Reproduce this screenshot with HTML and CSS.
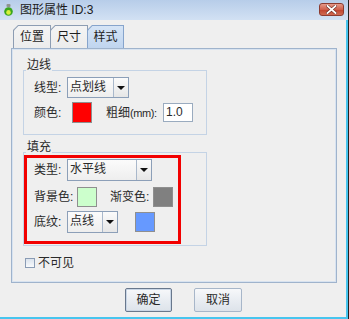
FILE: index.html
```html
<!DOCTYPE html>
<html>
<head>
<meta charset="utf-8">
<link rel="stylesheet" href="styles.css">
</head>
<body>
<div class="window">
  <div class="titlebar">
    <svg class="app-icon" width="9" height="12" viewBox="0 0 9 12">
      <rect x="2.5" y="0" width="4" height="3" rx="1" fill="#8f9490"/>
      <circle cx="4.5" cy="7.5" r="4.3" fill="#3aa61c"/>
      <circle cx="4.5" cy="8.4" r="2.3" fill="#d9f03c"/>
    </svg>
    <span class="title">图形属性 ID:3</span>
    <div class="close">
      <svg width="11" height="9" viewBox="0 0 11 9">
        <path d="M1.5 1 L9.5 8 M9.5 1 L1.5 8" stroke="#6b2a22" stroke-width="3" stroke-linecap="square"/>
        <path d="M1.5 1 L9.5 8 M9.5 1 L1.5 8" stroke="#ffffff" stroke-width="1.8" stroke-linecap="square"/>
      </svg>
    </div>
  </div>
  <div class="client">
    <div class="tabs">
      <div class="tab"><span>位置</span></div>
      <div class="tab"><span>尺寸</span></div>
      <div class="tab active"><span>样式</span></div>
    </div>
    <div class="panel">
      <div class="group g1">
        <span class="group-title">边线</span>
        <div class="row row-combo-a">
          <span class="label w33">线型:</span>
          <div class="combo combo-line"><span class="combo-text">点划线</span><span class="combo-btn"><i class="tri"></i></span></div>
        </div>
        <div class="row row-sw-a">
          <span class="label w38">颜色:</span>
          <div class="sw sw-red"></div>
          <span class="label w57 gap14">粗细<span class="latin">(mm):</span></span>
          <div class="input">1.0</div>
        </div>
      </div>
      <div class="group g2">
        <span class="group-title">填充</span>
        <div class="hl">
          <div class="row row-combo">
            <span class="label w33">类型:</span>
            <div class="combo combo-type"><span class="combo-text">水平线</span><span class="combo-btn"><i class="tri"></i></span></div>
          </div>
          <div class="row row-sw">
            <span class="label w43">背景色:</span>
            <div class="sw sw-green"></div>
            <span class="label w43 gap13">渐变色:</span>
            <div class="sw sw-grey"></div>
          </div>
          <div class="row row-combo-b">
            <span class="label w33">底纹:</span>
            <div class="combo combo-pattern"><span class="combo-text">点线</span><span class="combo-btn"><i class="tri"></i></span></div>
            <div class="sw sw-blue"></div>
          </div>
        </div>
      </div>
      <div class="check-row">
        <span class="box"></span>
        <span class="check-text">不可见</span>
      </div>
    </div>
    <div class="buttons">
      <div class="btn btn-default">确定</div>
      <div class="btn">取消</div>
    </div>
  </div>
</div>
</body>
</html>
```

FILE: styles.css
```css
html, body {
  margin: 0;
  padding: 0;
}
body {
  width: 349px;
  height: 319px;
  overflow: hidden;
  background: #efefef;
  font-family: "Liberation Sans", "Noto Sans CJK SC", sans-serif;
  font-size: 12px;
  color: #2a2a2a;
}
.window {
  width: 349px;
  height: 319px;
  box-sizing: border-box;
  border-right: 1px solid #222222;
  display: flex;
  flex-direction: column;
}
.titlebar {
  height: 20px;
  flex: none;
  display: flex;
  align-items: center;
  padding-left: 4px;
  background: linear-gradient(#b7cde9, #d2e1f3);
}
.app-icon {
  flex: none;
}
.title {
  margin-left: 7px;
  line-height: 14px;
  color: #1a1a1a;
}
.close {
  margin-left: auto;
  margin-right: 4px;
  align-self: flex-start;
  margin-top: 3px;
  width: 25px;
  height: 13px;
  box-sizing: border-box;
  border: 1px solid #8c3b30;
  border-radius: 3px;
  background: linear-gradient(#e59a8a, #d0604c 50%, #c0412c 51%, #cf6a52);
  display: flex;
  align-items: center;
  justify-content: center;
}
.client {
  flex: 1;
  box-sizing: border-box;
  border-right: 2px solid #47c5ee;
  border-bottom: 2px solid #47c5ee;
  padding: 5px 0 0 11px;
  display: flex;
  flex-direction: column;
}
.tabs {
  display: flex;
  margin-left: 2px;
  height: 23px;
}
.tab {
  width: 38px;
  height: 23px;
  margin-right: -1px;
  box-sizing: border-box;
  padding: 1px 1px 0 1px;
  background: #8d9db3;
  clip-path: polygon(5px 0, 100% 0, 100% 100%, 0 100%, 0 5px);
}
.tab span {
  display: block;
  height: 100%;
  background: linear-gradient(#f4f4f4, #ececec);
  clip-path: polygon(4.4px 0, 100% 0, 100% 100%, 0 100%, 0 4.4px);
  text-align: center;
  line-height: 22px;
  color: #1e1e1e;
}
.tab.active {
  width: 37px;
  background: #86a4cc;
}
.tab.active span {
  background: linear-gradient(#d5e4f6, #c0d5ef);
}
.panel {
  width: 326px;
  height: 235px;
  box-sizing: border-box;
  border: 1px solid #9fb3cc;
  box-shadow: inset 0 0 0 1px #d8e3f0;
  padding-left: 11px;
  display: flex;
  flex-direction: column;
  align-items: flex-start;
}
.group {
  position: relative;
  width: 184px;
  box-sizing: border-box;
  border: 1px solid #c4d3e5;
}
.group-title {
  position: absolute;
  top: -13px;
  left: 2px;
  padding: 0 1px;
  line-height: 14px;
  background: #efefef;
}
.g1 {
  margin-top: 21px;
  height: 65px;
  padding: 6px 0 0 10px;
}
.g2 {
  margin-top: 17px;
  height: 94px;
  padding-top: 2px;
}
.hl {
  width: 157px;
  height: 89px;
  box-sizing: border-box;
  border: 3px solid #f20000;
  padding: 1px 0 0 7px;
}
.row {
  display: flex;
  align-items: center;
}
.row-combo-a { height: 21px; }
.row-sw-a { height: 21px; margin-top: 4px; }
.row-combo { height: 22px; }
.row-sw { height: 20px; margin-top: 6px; }
.row-combo-b { height: 22px; margin-top: 4px; }
.label {
  flex: none;
  line-height: 14px;
  white-space: nowrap;
}
.latin {
  font-size: 11px;
  letter-spacing: -0.4px;
}
.w33 { width: 33px; }
.w38 { width: 38px; }
.w43 { width: 43px; }
.w57 { width: 57px; }
.gap14 { margin-left: 14px; }
.gap13 { margin-left: 13px; }
.combo {
  display: flex;
  height: 100%;
  box-sizing: border-box;
  border: 1px solid #8c9fb8;
  background: linear-gradient(#fbfbfb, #eeeeee);
}
.combo-line { width: 62px; }
.combo-type { width: 85px; }
.combo-pattern { width: 51px; }
.combo-text {
  flex: 1;
  padding-left: 2px;
  line-height: 19px;
  white-space: nowrap;
  overflow: hidden;
}
.combo-btn {
  flex: none;
  width: 15px;
  box-sizing: border-box;
  border-left: 1px solid #a9b8cb;
  background: linear-gradient(#fbfbfb, #e6e6e6);
  display: flex;
  align-items: center;
  justify-content: center;
}
.tri {
  display: block;
  width: 0;
  height: 0;
  border-left: 4px solid transparent;
  border-right: 4px solid transparent;
  border-top: 4px solid #111111;
}
.sw {
  flex: none;
  width: 20px;
  height: 20px;
  box-sizing: border-box;
  border: 1px solid #8f8f8f;
}
.row-sw-a .sw { height: 21px; }
.sw-red { background: #ff0000; }
.sw-green { background: #ccffcc; }
.sw-grey { background: #808080; }
.sw-blue { background: #6699ff; margin-left: 17px; }
.input {
  width: 30px;
  height: 19px;
  box-sizing: border-box;
  border: 1px solid #9aabbf;
  background: #ffffff;
  padding-left: 2px;
  line-height: 17px;
}
.check-row {
  display: flex;
  align-items: center;
  margin-top: 10px;
  margin-left: 2px;
}
.box {
  width: 10px;
  height: 10px;
  box-sizing: border-box;
  border: 1px solid #8a9cb5;
  background: linear-gradient(#dbe3ed, #f8fafc);
}
.check-text {
  margin-left: 3px;
  line-height: 14px;
}
.buttons {
  display: flex;
  gap: 22px;
  margin-top: 5px;
  padding-left: 114px;
}
.btn {
  width: 47px;
  height: 24px;
  box-sizing: border-box;
  border: 1px solid #a7b6c9;
  border-radius: 2px;
  background: linear-gradient(#f7f8fa, #e9edf2 50%, #dde3ea);
  text-align: center;
  line-height: 22px;
}
.btn-default {
  border-color: #68778c;
  box-shadow: inset 0 0 0 1px #c9d6e6;
}
.btn + .btn { width: 48px; }
```
